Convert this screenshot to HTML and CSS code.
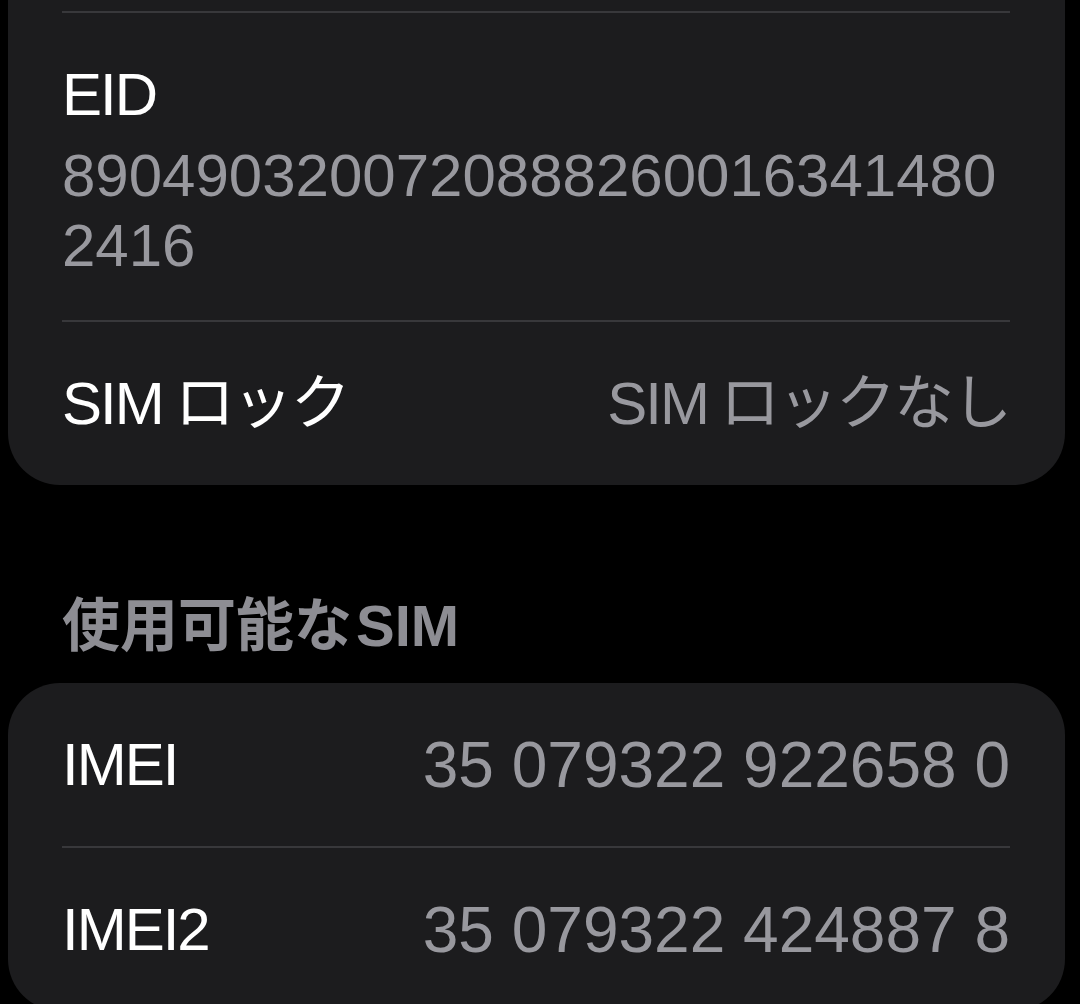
FILE: index.html
```html
<!DOCTYPE html>
<html lang="ja">
<head>
<meta charset="utf-8">
<title>SIM</title>
<link rel="stylesheet" href="styles.css">
</head>
<body>
<main class="screen">
  <section class="card card-cut">
    <div class="tail"></div>
    <div class="sep"></div>
    <div class="stack-row">
      <div class="label">EID</div>
      <div class="eid-value">89049032007208882600163414802416</div>
    </div>
    <div class="sep"></div>
    <div class="row">
      <div class="label"><span class="latin">SIM</span>ロック</div>
      <div class="value"><span class="latin">SIM</span>ロックなし</div>
    </div>
  </section>

  <h2 class="section-title">使用可能な<span class="latin-h">SIM</span></h2>

  <section class="card">
    <div class="row">
      <div class="label">IMEI</div>
      <div class="value num">35 079322 922658 0</div>
    </div>
    <div class="sep"></div>
    <div class="row">
      <div class="label">IMEI2</div>
      <div class="value num">35 079322 424887 8</div>
    </div>
  </section>
</main>
</body>
</html>
```

FILE: styles.css
```css
html, body {
  margin: 0;
  padding: 0;
  background: #000;
}

body {
  font-family: "Liberation Sans", "Noto Sans CJK JP", sans-serif;
  color: #fff;
  overflow: hidden;
}

.screen {
  display: flex;
  flex-direction: column;
}

.card {
  background: #1c1c1e;
  margin: 0 15px 0 8px;
  border-radius: 52px;
  overflow: hidden;
}

.card-cut {
  border-top-left-radius: 0;
  border-top-right-radius: 0;
}

.tail {
  height: 11px;
}

.sep {
  height: 2px;
  background: #38383b;
  margin: 0 55px 0 54px;
}

.row {
  display: flex;
  justify-content: space-between;
  align-items: center;
  height: 163px;
  padding: 0 55px 0 54px;
}

.stack-row {
  padding: 47px 55px 39px 54px;
}

.label {
  font-size: 60px;
  line-height: 70px;
  letter-spacing: -2px;
  color: #fff;
  white-space: nowrap;
}

.latin {
  margin-right: 12px;
}

.value {
  font-size: 60px;
  line-height: 70px;
  letter-spacing: -2px;
  color: #98989e;
  white-space: nowrap;
}

.value.num {
  font-size: 64px;
  letter-spacing: 0;
}

.eid-value {
  margin-top: 11px;
  font-size: 60px;
  line-height: 70px;
  color: #98989e;
  word-break: break-all;
}

.section-title {
  margin: 106px 0 22px;
  padding-left: 62px;
  font-size: 58px;
  line-height: 70px;
  font-weight: 700;
  color: #8d8d93;
}

.latin-h {
  margin-left: 4px;
}
```
